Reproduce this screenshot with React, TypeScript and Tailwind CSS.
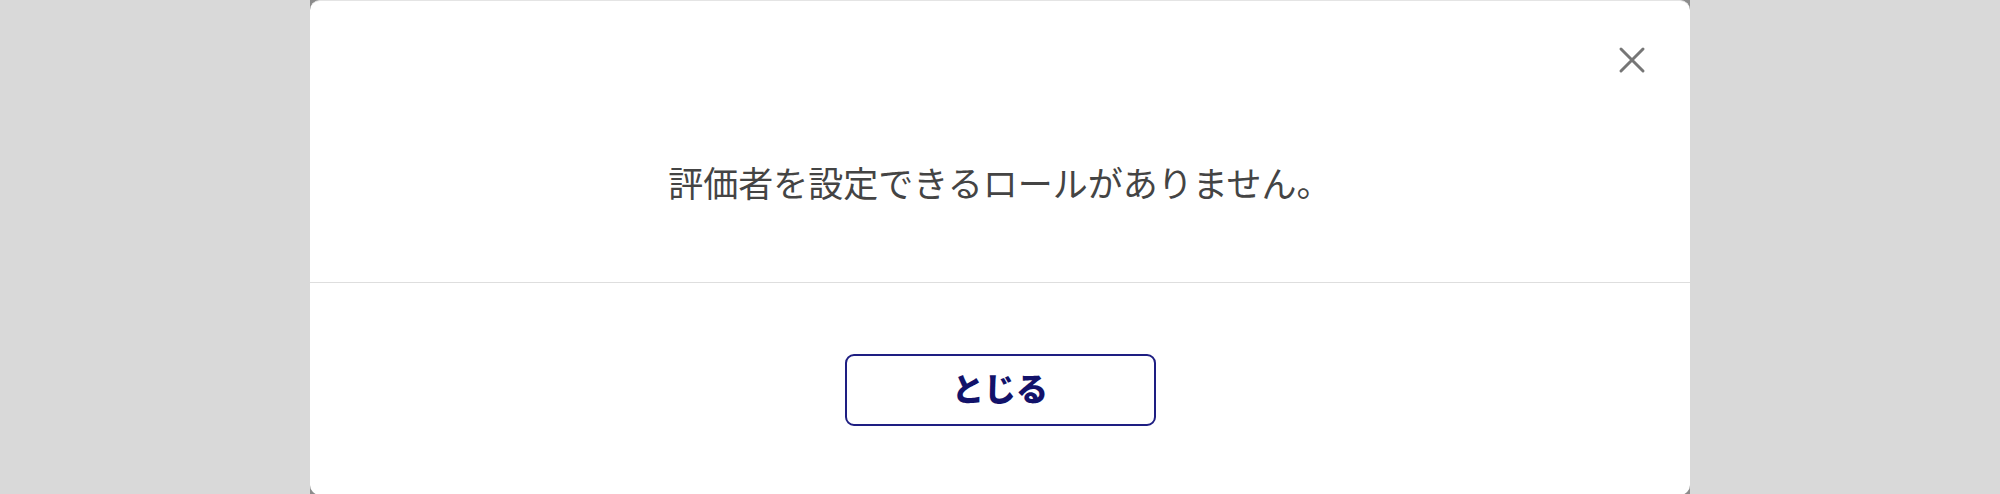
export default function App() {
  return (
    <div className="w-[2000px] h-[494px] bg-[#d9d9d9] flex justify-center overflow-hidden">
      {/* dark backing visible only through the rounded corners */}
      <div className="w-[1380px] h-[495px] bg-[#8c8c8c]">
        <div
          className="w-full h-full bg-white rounded-[10px] border-t border-[#e4e4e4] flex flex-col"
          style={{ fontFamily: '"Noto Sans CJK JP", "Noto Sans", sans-serif' }}
        >
          {/* Body */}
          <div className="h-[282px] flex flex-col border-b border-[#dedede]">
            <div className="flex justify-end pt-[45px] pr-[44px]">
              <button aria-label="閉じる" className="w-[28px] h-[28px] flex items-center justify-center">
                <svg width="28" height="28" viewBox="0 0 28 28" fill="none" stroke="#767676" strokeWidth="3" strokeLinecap="round">
                  <path d="M3 3L25 25M25 3L3 25" />
                </svg>
              </button>
            </div>
            <p className="mt-[82px] text-center text-[35px] leading-[51px] text-[#444444]">
              評価者を設定できるロールがありません。
            </p>
          </div>

          {/* Footer */}
          <div className="flex justify-center pt-[71px]">
            <button className="w-[311px] h-[72px] pb-[7px] rounded-[9px] border-2 border-[#1e1e82] bg-white text-[#12126a] text-[32px] font-black leading-none">
              とじる
            </button>
          </div>
        </div>
      </div>
    </div>
  );
}
